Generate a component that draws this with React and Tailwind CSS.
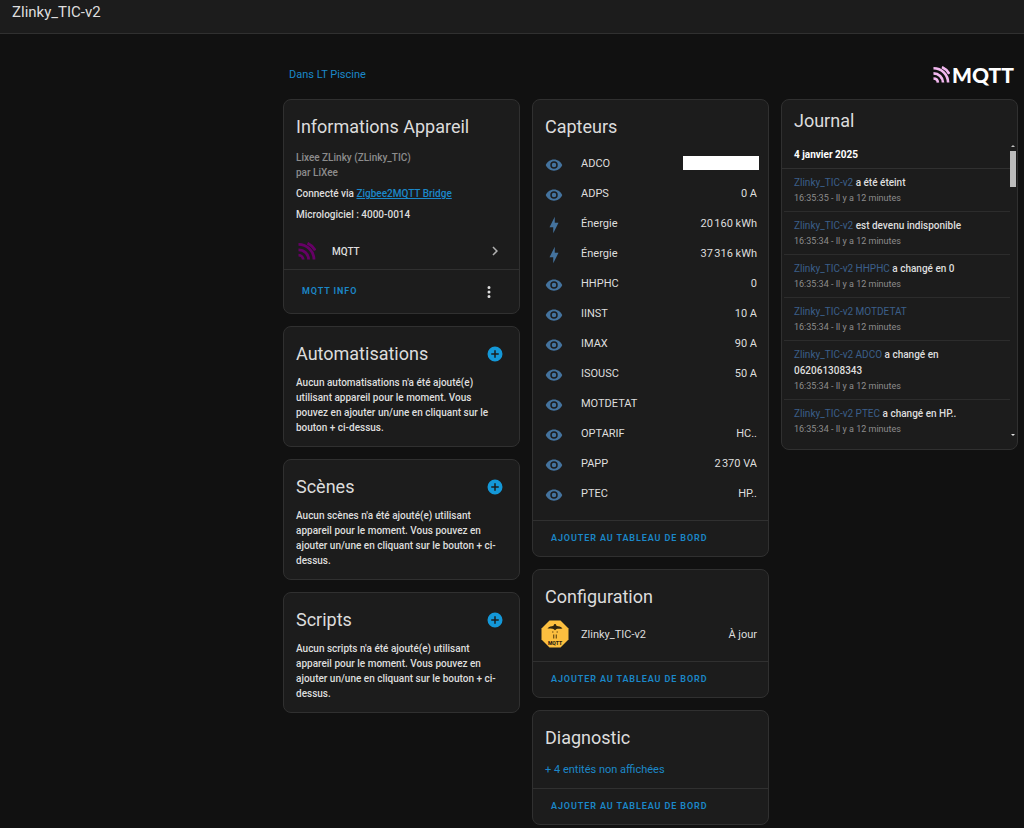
import { clsx } from "clsx";

const sensors = [
  { name: "ADCO", icon: "eye", masked: true },
  { name: "ADPS", icon: "eye", value: "0 A" },
  { name: "Énergie", icon: "bolt", value: "20\u202f160 kWh" },
  { name: "Énergie", icon: "bolt", value: "37\u202f316 kWh" },
  { name: "HHPHC", icon: "eye", value: "0" },
  { name: "IINST", icon: "eye", value: "10 A" },
  { name: "IMAX", icon: "eye", value: "90 A" },
  { name: "ISOUSC", icon: "eye", value: "50 A" },
  { name: "MOTDETAT", icon: "eye", value: "" },
  { name: "OPTARIF", icon: "eye", value: "HC.." },
  { name: "PAPP", icon: "eye", value: "2\u202f370 VA" },
  { name: "PTEC", icon: "eye", value: "HP.." },
];

const journal = [
  { entity: "Zlinky_TIC-v2", text: "a été éteint", time: "16:35:35" },
  { entity: "Zlinky_TIC-v2", text: "est devenu indisponible", time: "16:35:34" },
  { entity: "Zlinky_TIC-v2 HHPHC", text: "a changé en 0", time: "16:35:34" },
  { entity: "Zlinky_TIC-v2 MOTDETAT", text: "", time: "16:35:34" },
  { entity: "Zlinky_TIC-v2 ADCO", text: "a changé en 062061308343", time: "16:35:34" },
  { entity: "Zlinky_TIC-v2 PTEC", text: "a changé en HP..", time: "16:35:34" },
];

const paths = {
  eye: "M12,9A3,3 0 0,0 9,12A3,3 0 0,0 12,15A3,3 0 0,0 15,12A3,3 0 0,0 12,9M12,17A5,5 0 0,1 7,12A5,5 0 0,1 12,7A5,5 0 0,1 17,12A5,5 0 0,1 12,17M12,4.5C7,4.5 2.73,7.61 1,12C2.73,16.39 7,19.5 12,19.5C17,19.5 21.27,16.39 23,12C21.27,7.61 17,4.5 12,4.5Z",
  bolt: "M11 15H6L13 1V9H18L11 23V15Z",
  plus: "M17,13H13V17H11V13H7V11H11V7H13V11H17M12,2A10,10 0 0,0 2,12A10,10 0 0,0 12,22A10,10 0 0,0 22,12A10,10 0 0,0 12,2Z",
  chevron: "M8.59,16.58L13.17,12L8.59,7.41L10,6L16,12L10,18L8.59,16.58Z",
  dots: "M12,16A2,2 0 0,1 14,18A2,2 0 0,1 12,20A2,2 0 0,1 10,18A2,2 0 0,1 12,16M12,10A2,2 0 0,1 14,12A2,2 0 0,1 12,14A2,2 0 0,1 10,12A2,2 0 0,1 12,10M12,4A2,2 0 0,1 14,6A2,2 0 0,1 12,8A2,2 0 0,1 10,6A2,2 0 0,1 12,4Z",
};

const Icon = ({ name, className }) => (
  <svg viewBox="0 0 24 24" fill="currentColor" className={clsx("shrink-0", className)} aria-hidden="true">
    <path d={paths[name]} />
  </svg>
);

const MqttWaves = ({ className, stroke }) => (
  <svg viewBox="0 0 18 18" className={clsx("shrink-0", className)} fill="none" aria-hidden="true">
    <g stroke={stroke} strokeWidth="2.8">
      <path d="M0.5 13.2C3 13.2 5 15 5.2 17.5" />
      <path d="M0.5 7.8C6 7.8 10.4 12 10.6 17.5" />
      <path d="M0.5 2.4C9 2.4 15.8 9 16 17.5" />
      <path d="M9.5 1.2C12.8 2.7 15.5 5.2 17.2 8.4" />
    </g>
  </svg>
);

const Z2MLogo = () => (
  <svg viewBox="0 0 28 28" className="size-7 shrink-0" aria-hidden="true">
    <path d="M8.5 0.5H19.5L27.5 8.5V19.5L19.5 27.5H8.5L0.5 19.5V8.5Z" fill="#fcbf3f" />
    <path d="M6.5 8.5C8 6.5 10.5 6.5 12.6 5.8C12.8 3.4 15.2 3.4 15.4 5.8C17.5 6.5 20 6.5 21.5 8.5C18.5 8.8 16.5 8.5 15.6 9L14 10.2L12.4 9C11.5 8.5 9.5 8.8 6.5 8.5Z" fill="#2e2410" />
    <path d="M11 12H12.5M15.5 12H17M12.7 14.5V18.5M15.3 14.5V18.5" stroke="#6b4d16" strokeWidth="1.2" />
    <text x="14" y="24.5" textAnchor="middle" fontSize="5" fontWeight="900" fontFamily="Roboto, sans-serif" fill="#2e2410">
      MQTT
    </text>
  </svg>
);

const Card = ({ children }) => (
  <section className="rounded-lg border border-[#303030] bg-[#1c1c1c]">{children}</section>
);

const CardTitle = ({ children }) => (
  <h2 className="text-lg leading-6 font-normal text-[#dcdcdc]">{children}</h2>
);

const CardFooter = () => (
  <div className="flex h-9 items-center border-t border-[#303030] px-[18px]">
    <button className="text-[9px] font-semibold tracking-widest text-[#1b88c9] uppercase">
      Ajouter au tableau de bord
    </button>
  </div>
);

const EmptyCard = ({ title, text }) => (
  <Card>
    <div className="px-3 pt-[15px] pb-[11px]">
      <div className="mb-[9px] flex items-center justify-between">
        <CardTitle>{title}</CardTitle>
        <button aria-label={`Ajouter ${title}`} className="mr-[3px] text-[#1498d8]">
          <Icon name="plus" className="size-[18px]" />
        </button>
      </div>
      <p className="pr-2">{text}</p>
    </div>
  </Card>
);

const DeviceInfo = () => (
  <Card>
    <div className="px-3 pt-[15px]">
      <CardTitle>Informations Appareil</CardTitle>
      <p className="mt-[11px] text-[#8c8c8c]">
        Lixee ZLinky (ZLinky_TIC)
        <br />
        par LiXee
      </p>
      <p className="mt-1.5">
        Connecté via{" "}
        <a href="#bridge" className="text-[#1b88c9] underline">
          Zigbee2MQTT Bridge
        </a>
      </p>
      <p className="mt-1.5">Micrologiciel : 4000-0014</p>
      <a href="#mqtt" className="mt-[11px] flex h-9 items-center">
        <MqttWaves className="ml-0.5 size-[18px]" stroke="#660066" />
        <span className="ml-4 grow">MQTT</span>
        <Icon name="chevron" className="mr-[3px] size-[18px] text-[#b0b0b0]" />
      </a>
    </div>
    <div className="flex h-11 items-center justify-between border-t border-[#303030] pr-[21px] pl-[18px]">
      <button className="text-[9px] font-semibold tracking-widest text-[#1b88c9]">MQTT INFO</button>
      <button aria-label="Menu">
        <Icon name="dots" className="size-[18px]" />
      </button>
    </div>
  </Card>
);

const Journal = () => (
  <Card>
    <div className="px-3 pt-[9px]">
      <CardTitle>Journal</CardTitle>
    </div>
    <div className="mt-3 flex">
      <div className="grow">
        <h3 className="border-b border-[#303030] px-3 pt-0.5 pb-1.5 font-bold text-white">4 janvier 2025</h3>
        <ul className="divide-y divide-[#2c2c2c] pl-0.5">
          {journal.map((item, i) => (
            <li key={i} className="py-1.5 pr-6 pl-2.5 leading-4">
              <a href="#entity" className="font-normal text-[#3b5f8a]">{item.entity}</a> {item.text}
              <div className="text-[9px] leading-[14px] font-normal text-[#8c8c8c]">
                {item.time} - Il y a 12 minutes
              </div>
            </li>
          ))}
        </ul>
      </div>
      <div className="flex w-2 flex-col items-center" aria-hidden="true">
        <svg viewBox="0 0 4 2" className="mb-1 h-0.5 w-1 fill-[#c0c0c0]">
          <path d="M2 0L4 2H0Z" />
        </svg>
        <div className="h-9 w-1.5 bg-[#bcbcbc]" />
        <svg viewBox="0 0 4 2" className="mt-auto mb-1.5 h-0.5 w-1 fill-[#e0e0e0]">
          <path d="M0 0H4L2 2Z" />
        </svg>
      </div>
    </div>
    <div className="h-[7px]" />
  </Card>
);

const App = () => {
  return (
    <div className="min-h-screen bg-[#111111] font-[Roboto,sans-serif] text-[10px] leading-[15px] font-medium text-[#dedede]">
      <header className="border-b border-[#303030] bg-[#1c1c1c] px-3 pt-0.5 pb-[11px]">
        <h1 className="text-[15px] leading-5 font-normal">Zlinky_TIC-v2</h1>
      </header>

      <main className="pr-1.5 pl-[283px]">
        <div className="flex items-center justify-between pt-6 pr-1 pb-2 pl-1.5">
          <a href="#area" className="text-[11px] font-normal text-[#1b88c9]">
            Dans LT Piscine
          </a>
          <div className="flex h-[33px] items-center gap-0.5">
            <MqttWaves className="size-[17px]" stroke="#f3b8f0" />
            <span className="font-[Lato,sans-serif] text-[21px] leading-6 font-black text-white">MQTT</span>
          </div>
        </div>

        <div className="grid grid-cols-3 items-start gap-3">
          <div className="flex flex-col gap-3">
            <DeviceInfo />
            <EmptyCard
              title="Automatisations"
              text="Aucun automatisations n'a été ajouté(e) utilisant appareil pour le moment. Vous pouvez en ajouter un/une en cliquant sur le bouton + ci-dessus."
            />
            <EmptyCard
              title="Scènes"
              text="Aucun scènes n'a été ajouté(e) utilisant appareil pour le moment. Vous pouvez en ajouter un/une en cliquant sur le bouton + ci-dessus."
            />
            <EmptyCard
              title="Scripts"
              text="Aucun scripts n'a été ajouté(e) utilisant appareil pour le moment. Vous pouvez en ajouter un/une en cliquant sur le bouton + ci-dessus."
            />
          </div>

          <div className="flex flex-col gap-3 text-[11px] font-normal">
            <Card>
              <div className="pt-[15px] pr-[11px] pb-3 pl-3">
                <CardTitle>Capteurs</CardTitle>
                <ul className="mt-[9px]">
                  {sensors.map((sensor, i) => (
                    <li key={i} className="flex h-[30px] items-center">
                      <Icon name={sensor.icon} className="mt-1 size-[18px] text-[#44739e]" />
                      <span className="ml-[18px] grow">{sensor.name}</span>
                      {sensor.masked ? (
                        <span className="-mr-0.5 h-3.5 w-[76px] bg-white" />
                      ) : (
                        <span>{sensor.value}</span>
                      )}
                    </li>
                  ))}
                </ul>
              </div>
              <CardFooter />
            </Card>

            <Card>
              <div className="pt-[15px] pr-[11px] pb-3 pl-3">
                <CardTitle>Configuration</CardTitle>
                <div className="mt-2.5 -ml-1 flex h-[30px] items-center">
                  <Z2MLogo />
                  <span className="ml-3 grow">Zlinky_TIC-v2</span>
                  <span>À jour</span>
                </div>
              </div>
              <CardFooter />
            </Card>

            <Card>
              <div className="px-3 pt-[15px] pb-[11px]">
                <CardTitle>Diagnostic</CardTitle>
                <button className="mt-3 block text-[#1b88c9]">+ 4 entités non affichées</button>
              </div>
              <CardFooter />
            </Card>
          </div>

          <Journal />
        </div>
      </main>
    </div>
  );
};

export default App;
